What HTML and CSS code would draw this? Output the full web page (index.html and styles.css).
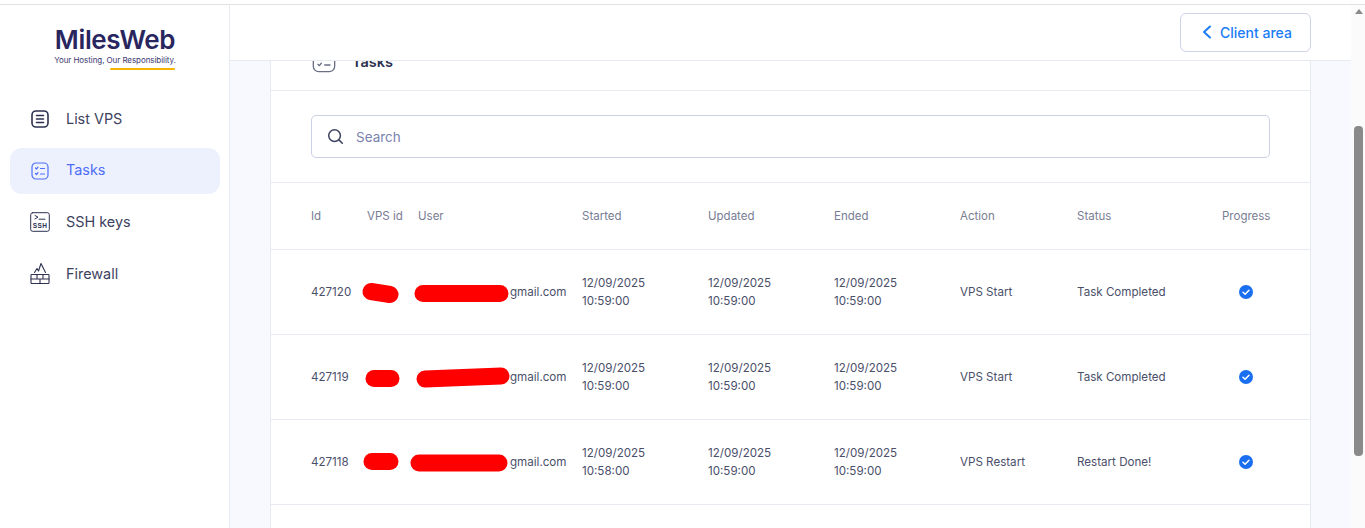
FILE: index.html
```html
<!DOCTYPE html>
<html lang="en">
<head>
<meta charset="utf-8">
<title>Tasks</title>
<link rel="stylesheet" href="styles.css">
</head>
<body>
<div class="topline"></div>
<div class="app">
  <aside class="sidebar">
    <div class="logo">
      <div class="logo-name">MilesWeb</div>
      <div class="logo-tag">Your Hosting, Our Responsibility.</div>
      <div class="logo-bar"></div>
    </div>
    <nav class="nav">
      <a class="nav-item">
        <svg class="nav-icon" viewBox="0 0 18 18" fill="none" stroke="currentColor" stroke-width="1.6" stroke-linecap="round"><rect x="1" y="1" width="16" height="16" rx="4"/><path d="M5.500 5.500h7M5.500 9h7M5.500 12.500h7"/></svg>
        <span>List VPS</span>
      </a>
      <a class="nav-item active">
        <svg class="nav-icon" viewBox="0 0 18 18" fill="none" stroke="currentColor" stroke-width="1.200" stroke-linecap="round" stroke-linejoin="round"><rect x="1" y="1" width="16" height="16" rx="4"/><path d="M4.500 6l1 1 1.500-1.800M9.500 6.500h4M4.500 11.500l1 1 1.500-1.800M9.500 12h4"/></svg>
        <span>Tasks</span>
      </a>
      <a class="nav-item">
        <svg class="nav-icon ssh" viewBox="0 0 20 20" fill="none" stroke="currentColor" stroke-width="1" stroke-linecap="round"><rect x=".7" y=".7" width="18.600" height="18.600" rx="2"/><path d="M5 3.500l3 1.700-3 1.700M9 7.200h6"/><text x="10" y="16.400" text-anchor="middle" class="ssh-text">SSH</text></svg>
        <span>SSH keys</span>
      </a>
      <a class="nav-item">
        <svg class="nav-icon ssh" viewBox="0 0 20 20" fill="none" stroke="currentColor" stroke-width="1.100" stroke-linecap="round" stroke-linejoin="round"><path d="M4.500 8.500L7 4.500l1.500 2.500L11 -.5l4.500 9"/><rect x="1" y="10.500" width="18" height="9" rx=".8"/><path d="M1 15h18M7 10.500V15M13 10.500V15M10 15v4.500"/></svg>
        <span>Firewall</span>
      </a>
    </nav>
  </aside>
  <div class="main">
    <header class="topbar">
      <a class="client-btn">
        <svg class="chev" viewBox="0 0 10 14" fill="none" stroke="currentColor" stroke-width="2" stroke-linecap="round" stroke-linejoin="round"><path d="M8 1.500L2 7l6 5.500"/></svg>
        <span>Client area</span>
      </a>
    </header>
    <div class="content">
      <section class="card">
        <div class="card-head">
          <svg class="head-icon" viewBox="0 0 18 18" fill="none" stroke="currentColor" stroke-width="1" stroke-linecap="round" stroke-linejoin="round"><rect x="1" y="1" width="16" height="16" rx="4"/><path d="M4.500 6l1 1 1.500-1.800M9.500 6.500h4M4.500 11.500l1 1 1.500-1.800M9.500 12h4"/></svg>
          <h1 class="card-title">Tasks</h1>
        </div>
        <div class="search-wrap">
          <div class="search">
            <svg class="search-icon" viewBox="0 0 18 18" fill="none" stroke="currentColor" stroke-width="1.600" stroke-linecap="round"><circle cx="8" cy="8" r="6.200"/><path d="M12.600 12.600l3.600 3.600"/></svg>
            <span class="search-ph">Search</span>
          </div>
        </div>
        <div class="row head">
          <div>Id</div><div>VPS id</div><div>User</div><div>Started</div><div>Updated</div><div>Ended</div><div>Action</div><div>Status</div><div>Progress</div>
        </div>
        <div class="row">
          <div>427120</div>
          <div><svg class="scribble vps" viewBox="0 0 40 24"><path d="M3 11.500l19 3"/></svg></div>
          <div class="user"><svg class="scribble mail" viewBox="0 0 92 24"><path d="M5 13.500h77"/></svg>gmail.com</div>
          <div>12/09/2025<br>10:59:00</div><div>12/09/2025<br>10:59:00</div><div>12/09/2025<br>10:59:00</div>
          <div>VPS Start</div><div>Task Completed</div>
          <div class="progress"><svg class="check" viewBox="0 0 14 14"><circle cx="7" cy="7" r="7"/><path d="M4 7.300l2.100 2 3.900-4"/></svg></div>
        </div>
        <div class="row">
          <div>427119</div>
          <div><svg class="scribble vps" viewBox="0 0 40 24"><path d="M6 13.500h17"/></svg></div>
          <div class="user"><svg class="scribble mail" viewBox="0 0 92 24"><path d="M7 14l76-3"/></svg>gmail.com</div>
          <div>12/09/2025<br>10:59:00</div><div>12/09/2025<br>10:59:00</div><div>12/09/2025<br>10:59:00</div>
          <div>VPS Start</div><div>Task Completed</div>
          <div class="progress"><svg class="check" viewBox="0 0 14 14"><circle cx="7" cy="7" r="7"/><path d="M4 7.300l2.100 2 3.900-4"/></svg></div>
        </div>
        <div class="row">
          <div>427118</div>
          <div><svg class="scribble vps" viewBox="0 0 40 24"><path d="M4 11.500h18"/></svg></div>
          <div class="user"><svg class="scribble mail" viewBox="0 0 92 24"><path d="M1 13h80"/></svg>gmail.com</div>
          <div>12/09/2025<br>10:58:00</div><div>12/09/2025<br>10:59:00</div><div>12/09/2025<br>10:59:00</div>
          <div>VPS Restart</div><div>Restart Done!</div>
          <div class="progress"><svg class="check" viewBox="0 0 14 14"><circle cx="7" cy="7" r="7"/><path d="M4 7.300l2.100 2 3.900-4"/></svg></div>
        </div>
      </section>
    </div>
  </div>
  <div class="scrollbar">
    <div class="scroll-arrow"></div>
    <div class="scroll-thumb"></div>
  </div>
</div>
</body>
</html>
```
FILE: styles.css
```css
* { box-sizing: border-box; }
html, body { height: 100%; }
body {
  margin: 0;
  display: flex;
  flex-direction: column;
  overflow: hidden;
  background: #fff;
  font-family: Inter, "Liberation Sans", sans-serif;
  color: #3d4260;
}
.topline { height: 5px; flex: none; background: #fff; border-bottom: 1px solid #e2e2e2; }
.app { flex: 1; min-height: 0; display: flex; }

.sidebar { width: 230px; flex: none; background: #fff; border-right: 1px solid #e8eaf2; padding: 0 9px 0 10px; }
.logo { height: 65px; padding-top: 21px; display: flex; flex-direction: column; align-items: center; }
.logo-name { font-size: 26px; line-height: 28px; font-weight: 600; letter-spacing: -.35px; color: #29265f; }
.logo-tag { font-size: 8px; line-height: 10px; color: #3a3770; margin-top: 1px; letter-spacing: -.07px; white-space: nowrap; }
.logo-bar { width: 65px; height: 2px; background: #f5b400; border-radius: 1px; margin: 3px 0 0 55px; }
.nav { margin-top: 26px; display: flex; flex-direction: column; gap: 5.700px; }
.nav-item { height: 46px; display: flex; align-items: center; gap: 17px; padding-left: 21px; border-radius: 12px; font-size: 14.400px; color: #3d4260; }
.nav-item span { margin-bottom: 2px; }
.nav-item.active { background: #edf1fe; color: #4f6ef7; }
.nav-icon { width: 18px; height: 18px; flex: none; color: #2c3150; overflow: visible; }
.nav-item.active .nav-icon { color: #4f6ef7; }
.nav-icon.ssh { width: 20px; height: 20px; margin: 0 -1px; }
.ssh-text { font: 700 6.500px "Liberation Sans", sans-serif; fill: currentColor; stroke: none; letter-spacing: .3px; }

.main { flex: 1; min-width: 0; display: flex; flex-direction: column; background: #f8f9fe; }
.topbar { height: 56px; flex: none; background: #fff; border-bottom: 1px solid #e8eaf2; display: flex; align-items: center; justify-content: flex-end; padding: 0 40px 1px 0; position: relative; z-index: 1; }
.client-btn { width: 131px; height: 39px; border: 1px solid #d0d4e8; border-radius: 6px; display: flex; align-items: center; gap: 8px; padding-left: 21px; color: #1a7cf7; font-size: 14px; font-weight: 500; }
.chev { width: 10px; height: 14px; flex: none; }
.content { flex: 1; min-height: 0; overflow: hidden; padding: 0 40px; }
.card { margin-top: -29px; min-height: 600px; background: #fff; border: 1px solid #e8eaf2; border-top: 0; }
.card-head { height: 59px; display: flex; align-items: center; gap: 16px; padding-left: 41px; border-bottom: 1px solid #e8eaf2; }
.head-icon { width: 24px; height: 24px; color: #6b6f85; flex: none; }
.card-title { margin: 0; font-size: 14.500px; font-weight: 600; color: #2c3150; }
.search-wrap { height: 92px; padding: 24px 40px 0; border-bottom: 1px solid #e8eaf2; }
.search { height: 43px; border: 1px solid #ccd0e4; border-radius: 5px; display: flex; align-items: center; gap: 12px; padding-left: 15px; }
.search-icon { width: 17px; height: 17px; color: #3d4260; flex: none; }
.search-ph { font-size: 13.500px; color: #7a83ae; }

.row { height: 85px; display: grid; grid-template-columns: 56px 51px 164px 126px 126px 126px 117px 145px 48px; align-items: center; padding: 0 40px; border-bottom: 1px solid #e8eaf2; font-size: 11.600px; line-height: 18px; color: #4a4f6a; white-space: nowrap; }
.row.head { height: 67px; color: #787d94; font-size: 11.500px; }
.user { display: flex; align-items: center; }
.scribble { display: block; overflow: visible; height: 24px; }
.scribble path { fill: none; stroke: #f00; stroke-width: 17; stroke-linecap: round; stroke-linejoin: round; }
.scribble.vps { width: 40px; margin-left: 1px; }
.scribble.mail { width: 92px; flex: none; }
.progress { display: flex; justify-content: center; }
.check { width: 14px; height: 14px; }
.check circle { fill: #1a6ff0; }
.check path { fill: none; stroke: #fff; stroke-width: 1.500; stroke-linecap: round; stroke-linejoin: round; }

.scrollbar { width: 14px; flex: none; background: #fbfbfb; padding: 4px 2px 0 3px; }
.scroll-arrow { width: 0; height: 0; margin: 0 auto; border: 4.500px solid transparent; border-top: 0; border-bottom: 5px solid #8a8a8a; }
.scroll-thumb { height: 330px; margin-top: 112px; background: #8a8a8a; border-radius: 4px; }
```
